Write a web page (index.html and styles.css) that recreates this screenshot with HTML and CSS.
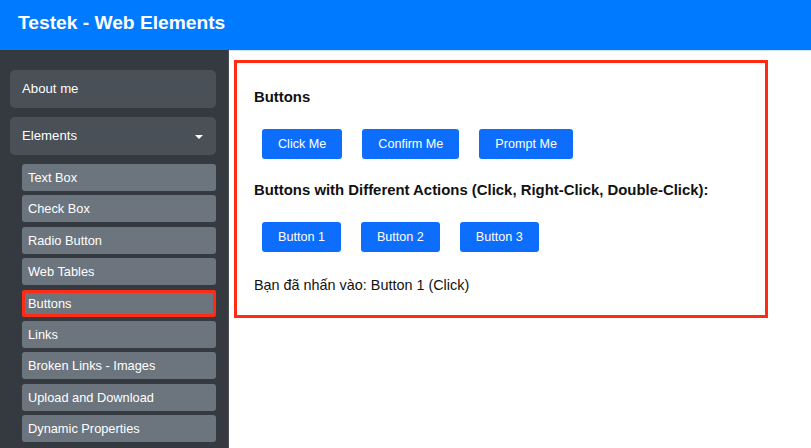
FILE: index.html
```html
<!DOCTYPE html>
<html lang="vi">
<head>
<meta charset="utf-8">
<title>Testek - Web Elements</title>
<link rel="stylesheet" href="styles.css">
</head>
<body>
<header class="topbar">
  <h1 class="brand">Testek - Web Elements</h1>
</header>
<div class="layout">
  <nav class="sidebar">
    <div class="nav-item">About me</div>
    <div class="nav-item nav-toggle">Elements <span class="caret"></span></div>
    <ul class="sub-list">
      <li class="sub-item">Text Box</li>
      <li class="sub-item">Check Box</li>
      <li class="sub-item">Radio Button</li>
      <li class="sub-item">Web Tables</li>
      <li class="sub-item active">Buttons</li>
      <li class="sub-item">Links</li>
      <li class="sub-item">Broken Links - Images</li>
      <li class="sub-item">Upload and Download</li>
      <li class="sub-item">Dynamic Properties</li>
    </ul>
  </nav>
  <main class="main">
    <section class="panel">
      <h3 class="panel-title">Buttons</h3>
      <div class="btn-row">
        <button class="btn">Click Me</button>
        <button class="btn">Confirm Me</button>
        <button class="btn">Prompt Me</button>
      </div>
      <h3 class="panel-title">Buttons with Different Actions (Click, Right-Click, Double-Click):</h3>
      <div class="btn-row">
        <button class="btn">Button 1</button>
        <button class="btn">Button 2</button>
        <button class="btn">Button 3</button>
      </div>
      <p class="result">Bạn đã nhấn vào: Button 1 (Click)</p>
    </section>
  </main>
</div>
</body>
</html>
```
FILE: styles.css
```css
* { box-sizing: border-box; }
html, body {
  margin: 0;
  padding: 0;
  height: 100%;
  overflow: hidden;
  background: #fff;
  font-family: "Liberation Sans", Arial, sans-serif;
}
.topbar {
  height: 50px;
  background: #007bff;
  padding-left: 18px;
}
.brand {
  margin: 0;
  color: #fff;
  font-size: 19.2px;
  font-weight: bold;
  line-height: 46px;
}
.layout {
  display: flex;
  height: calc(100% - 50px);
}
.sidebar {
  width: 229px;
  flex: none;
  background: #343a40;
  padding: 20px 12px 0 10px;
  border-right: 1px solid #4a5057;
}
.nav-item {
  height: 38px;
  background: #495057;
  color: #fff;
  border-radius: 5px;
  font-size: 13.2px;
  line-height: 38px;
  padding-left: 12px;
  margin-bottom: 9px;
}
.nav-toggle {
  display: flex;
  justify-content: space-between;
  align-items: center;
  padding-right: 13px;
}
.caret {
  width: 0;
  height: 0;
  border-left: 4px solid transparent;
  border-right: 4px solid transparent;
  border-top: 4px solid #fff;
  margin-top: 2px;
}
.sub-list {
  list-style: none;
  margin: 0;
  padding: 0 0 0 12px;
  display: flex;
  flex-direction: column;
  gap: 4.4px;
}
.sub-item {
  height: 27px;
  background: #6c757d;
  color: #fff;
  border-radius: 3px;
  font-size: 12.8px;
  line-height: 27px;
  padding-left: 6px;
}
.sub-item.active {
  border: 3px solid #ff2b14;
  border-radius: 2px;
  line-height: 21px;
  padding-left: 3px;
}
.main {
  flex: 1;
  border-top: 1px solid #d3e5fb;
  padding: 9px 0 0 5px;
}
.panel {
  width: 534px;
  border: 3px solid #ff2b14;
  padding: 25px 17px 20px;
  color: #111;
}
.panel-title {
  margin: 0;
  font-size: 14.9px;
  font-weight: bold;
  line-height: 19px;
}
.btn-row {
  display: flex;
  gap: 20px;
  margin: 22px 0 22px 8px;
}
.btn {
  height: 30px;
  padding: 0 16px;
  background: #0d6efd;
  color: #fff;
  border: none;
  border-radius: 3px;
  font-family: "Liberation Sans", Arial, sans-serif;
  font-size: 12.6px;
}
.result {
  margin: 24px 0 0;
  font-size: 14.4px;
  line-height: 19px;
}
```
